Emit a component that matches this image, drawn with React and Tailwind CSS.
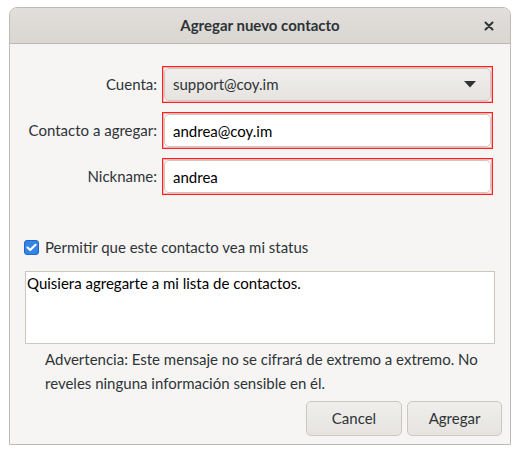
import React, { useState } from 'react';

const font = { fontFamily: 'Lato, "Noto Sans", sans-serif' };

const Field = ({ label, children }) => (
  <>
    <label className="text-right text-[15px] text-[#2e3436] pr-[5px] self-center">{label}</label>
    <div className="border border-[#ff2020] p-px shadow-[inset_0_0_0_1px_#ffb0b0] h-[37px]">
      {children}
    </div>
  </>
);

const AddContactDialog = () => {
  const [account] = useState('support@coy.im');
  const [contact, setContact] = useState('andrea@coy.im');
  const [nick, setNick] = useState('andrea');
  const [allow, setAllow] = useState(true);
  const [message, setMessage] = useState('Quisiera agregarte a mi lista de contactos.');

  return (
    <div className="w-[520px] h-[455px] bg-white pt-[7px] px-[9px]" style={font}>
      <div className="w-[502px] h-[438px] flex flex-col border border-[#bfbab5] rounded-t-[8px] bg-[#f6f5f4] overflow-hidden">
        {/* Header bar */}
        <div className="h-[36px] shrink-0 flex items-center justify-center relative bg-gradient-to-b from-[#e1dedb] to-[#dad6d2] border-b border-[#bfb8b1] text-[#2e3436]">
          <span className="font-bold text-[15px]">Agregar nuevo contacto</span>
          <button className="absolute right-[12px] top-[9px] w-[18px] h-[18px] flex items-center justify-center">
            <svg width="10" height="10" viewBox="0 0 10 10">
              <path d="M1.5 1.5 L8.5 8.5 M8.5 1.5 L1.5 8.5" stroke="#2e3436" strokeWidth="2" strokeLinecap="round" />
            </svg>
          </button>
        </div>

        {/* Form */}
        <div className="grid grid-cols-[152px_331px] gap-y-[9px] mt-[22px]">
          <Field label="Cuenta:">
            <div className="h-full rounded-[5px] border border-[#cdc7c2] bg-gradient-to-b from-[#f0efed] to-[#e6e3e0] flex items-center justify-between pl-[8px] pr-[14px] text-[15px] text-[#2e3436]">
              <span>{account}</span>
              <svg width="12" height="7" viewBox="0 0 12 7"><path d="M0 0 H12 L6 6.5 Z" fill="#2e3436" /></svg>
            </div>
          </Field>
          <Field label="Contacto a agregar:">
            <input
              value={contact}
              onChange={(e) => setContact(e.target.value)}
              className="w-full h-full rounded-[5px] border border-[#cdc7c2] bg-white px-[8px] text-[15px] text-black outline-none"
              style={font}
            />
          </Field>
          <Field label="Nickname:">
            <input
              value={nick}
              onChange={(e) => setNick(e.target.value)}
              className="w-full h-full rounded-[5px] border border-[#cdc7c2] bg-white px-[8px] text-[15px] text-black outline-none"
              style={font}
            />
          </Field>
        </div>

        {/* Checkbox */}
        <label className="flex items-center gap-[6px] ml-[14px] mt-[41px] text-[15px] text-[#2e3436]">
          <span
            onClick={() => setAllow(!allow)}
            className={`w-[15px] h-[15px] rounded-[3px] flex items-center justify-center ${allow ? 'bg-[#3584e4] border border-[#1b6acb]' : 'bg-white border border-[#cdc7c2]'}`}
          >
            {allow && (
              <svg width="11" height="9" viewBox="0 0 11 9">
                <path d="M1.5 4.5 L4.2 7 L9.5 1.8" stroke="white" strokeWidth="2.2" fill="none" strokeLinecap="round" strokeLinejoin="round" />
              </svg>
            )}
          </span>
          Permitir que este contacto vea mi status
        </label>

        {/* Message */}
        <textarea
          value={message}
          onChange={(e) => setMessage(e.target.value)}
          className="mx-[15px] mt-[12px] h-[73px] shrink-0 resize-none border border-[#cdc7c2] bg-white px-[1px] py-0 text-[15px] leading-[22px] text-black outline-none"
          style={font}
        />

        {/* Warning */}
        <p className="ml-[35px] mr-[20px] mt-[3px] text-[15px] leading-[24px] text-[#2e3436]">
          Advertencia: Este mensaje no se cifrará de extremo a extremo. No reveles ninguna información sensible en él.
        </p>

        {/* Actions */}
        <div className="flex justify-end gap-[5px] mr-[8px] mt-[6px]">
          <button className="w-[96px] h-[35px] rounded-[5px] border border-[#cdc7c2] bg-gradient-to-b from-[#f0efed] to-[#e6e3e0] text-[15px] text-[#2e3436]">
            Cancel
          </button>
          <button className="w-[95px] h-[35px] rounded-[5px] border border-[#cdc7c2] bg-gradient-to-b from-[#f0efed] to-[#e6e3e0] text-[15px] text-[#2e3436]">
            Agregar
          </button>
        </div>
      </div>
    </div>
  );
};

export default AddContactDialog;
